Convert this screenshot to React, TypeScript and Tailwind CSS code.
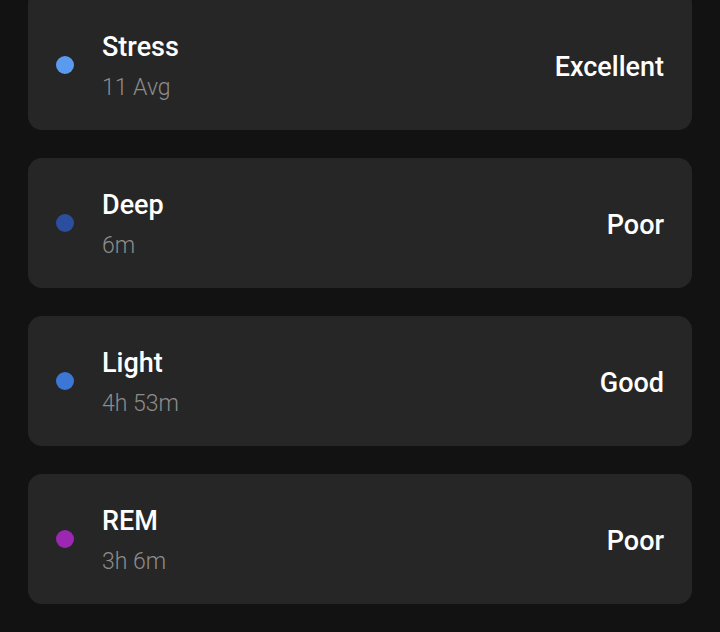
import React from "react";

type Stage = {
  name: string;
  value: string;
  rating: string;
  dot: string;
};

const stages: Stage[] = [
  { name: "Stress", value: "11 Avg", rating: "Excellent", dot: "bg-[#5a9bef]" },
  { name: "Deep", value: "6m", rating: "Poor", dot: "bg-[#2b4e9f]" },
  { name: "Light", value: "4h 53m", rating: "Good", dot: "bg-[#3d77d6]" },
  { name: "REM", value: "3h 6m", rating: "Poor", dot: "bg-[#9b27b3]" },
];

function StageCard({ stage, first }: { stage: Stage; first?: boolean }) {
  return (
    <div
      className={
        "flex items-center rounded-[14px] bg-[#262626] px-7 " +
        (first ? "-mt-[10px] h-[140px] pt-[10px]" : "h-[130px]")
      }
    >
      <div className={"h-[18px] w-[18px] shrink-0 rounded-full " + stage.dot} />
      <div className="ml-7 mt-[4px] flex min-w-0 flex-1 flex-col">
        <div className="text-[27px] font-medium leading-[32px] text-white">{stage.name}</div>
        <div className="mt-[10px] text-[23px] font-light leading-[30px] text-[#8c8c8c]">{stage.value}</div>
      </div>
      <div className="mt-[4px] text-[27px] font-medium leading-[32px] text-white">{stage.rating}</div>
    </div>
  );
}

export default function App() {
  return (
    <div
      className="h-[632px] w-[720px] overflow-hidden bg-[#121212] px-7"
      style={{ fontFamily: "Roboto, 'Noto Sans', sans-serif" }}
    >
      <div className="flex flex-col gap-7">
        {stages.map((s, i) => (
          <StageCard key={s.name} stage={s} first={i === 0} />
        ))}
      </div>
    </div>
  );
}
